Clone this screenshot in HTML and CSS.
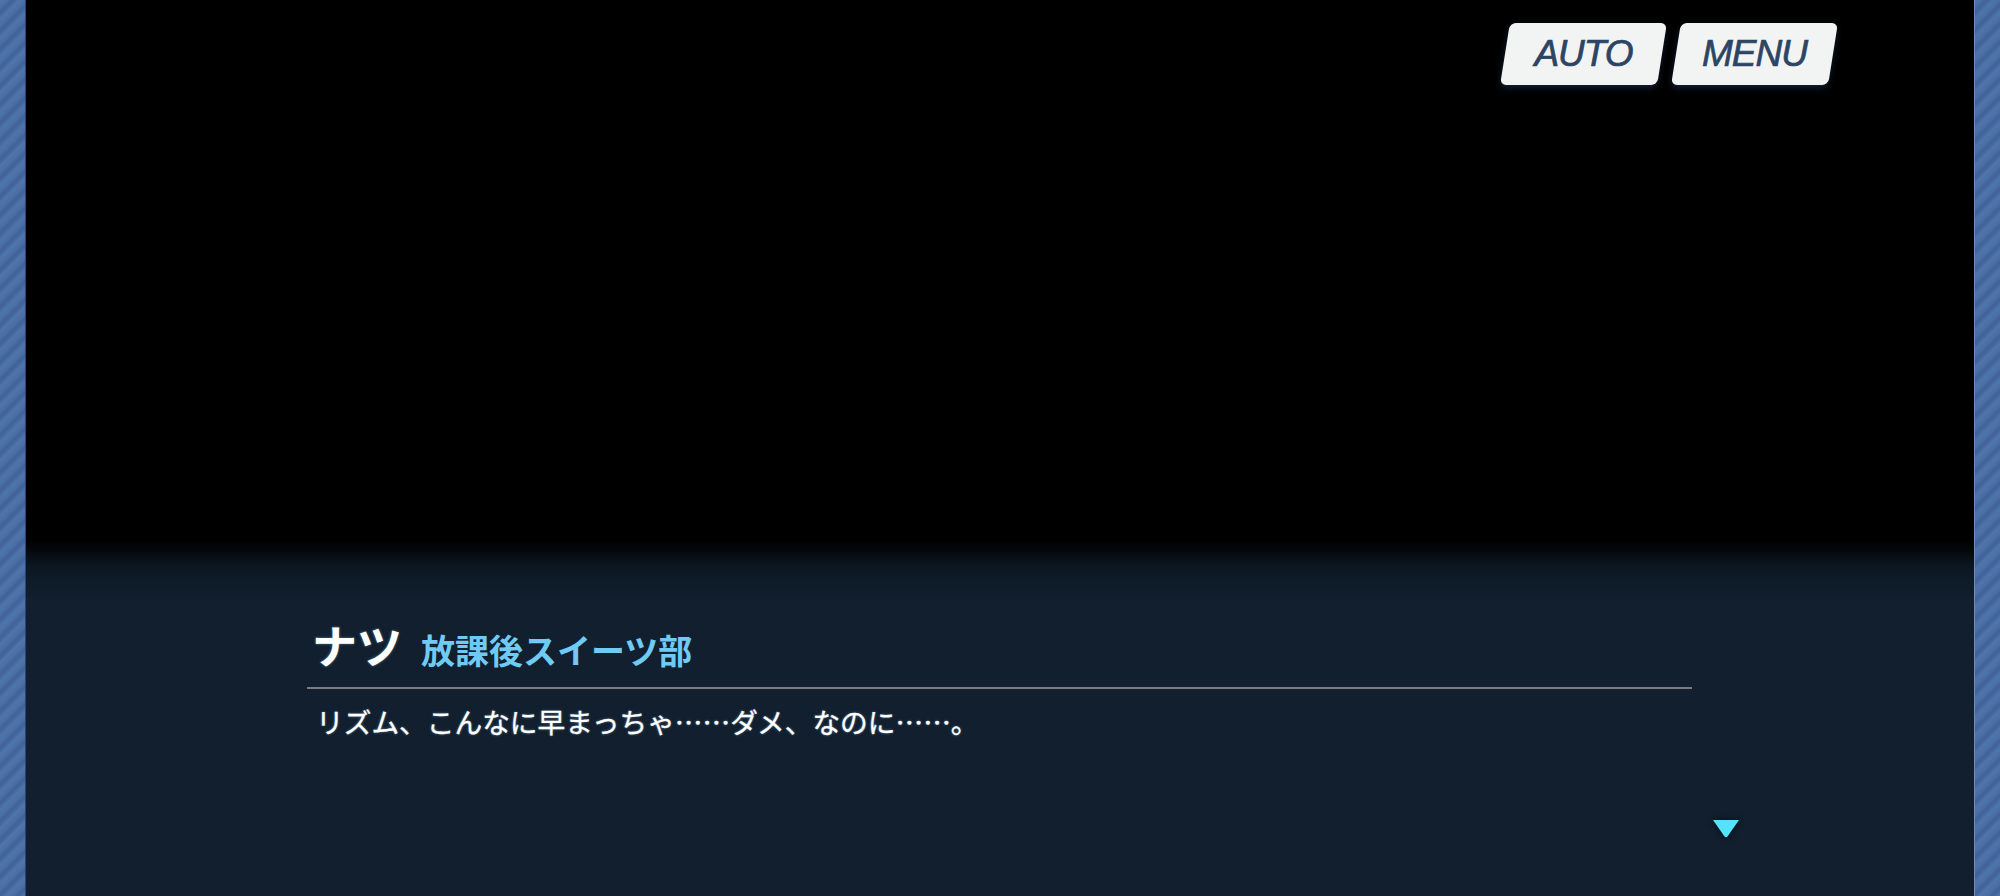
FILE: index.html
```html
<!DOCTYPE html>
<html lang="ja">
<head>
    <meta charset="UTF-8">
    <meta name="viewport" content="width=device-width, initial-scale=1.0">
    <title>Scenario</title>
    <link rel="stylesheet" href="styles.css">
</head>
<body>
    <div class="frame">
        <div class="side"></div>
        <div class="stage">
            <div class="toolbar">
                <button class="tool-btn"><span>AUTO</span></button>
                <button class="tool-btn"><span>MENU</span></button>
            </div>
            <div class="dialogue">
                <div class="dialogue-body">
                    <div class="speaker">
                        <span class="speaker-name">ナツ</span>
                        <span class="speaker-club">放課後スイーツ部</span>
                    </div>
                    <p class="line">リズム、こんなに早まっちゃ……ダメ、なのに……。</p>
                </div>
                <svg class="next" width="28" height="19" viewBox="0 0 28 19">
                    <path d="M1 1 L27 1 L15.5 17.5 Q14 19 12.5 17.5 Z" fill="#54e3fa"/>
                </svg>
            </div>
        </div>
        <div class="side side-right"></div>
    </div>
</body>
</html>
```

FILE: styles.css
```css
html, body {
    margin: 0;
    height: 100%;
    background: #000;
}
.frame {
    display: flex;
    width: 2000px;
    height: 896px;
    overflow: hidden;
}
.side {
    width: 26px;
    flex-shrink: 0;
    background: repeating-linear-gradient(135deg, #4f75ab 0, #4b70a6 5px, #41619a 9px, #4b70a6 13px);
    box-shadow: inset -1px 0 0 #2d4670;
}
.side-right {
    box-shadow: inset 1px 0 0 #6a8cc0;
}
.stage {
    flex: 1;
    display: flex;
    flex-direction: column;
    justify-content: space-between;
    background: #000;
}
.toolbar {
    display: flex;
    justify-content: flex-end;
    gap: 14px;
    padding: 23px 141px 0 0;
}
.tool-btn {
    width: 157px;
    height: 62px;
    padding: 0;
    border: none;
    border-radius: 6px;
    background: #f2f4f3;
    transform: skewX(-9deg);
    box-shadow: 0 3px 6px rgba(25, 45, 75, 0.7);
    cursor: pointer;
}
.tool-btn span {
    display: block;
    font-family: "Liberation Sans", Arial, sans-serif;
    font-size: 37px;
    font-style: italic;
    letter-spacing: -1px;
    color: #2c4564;
    -webkit-text-stroke: 0.7px #2c4564;
    transform: skewX(9deg);
}
.dialogue {
    display: flex;
    height: 356px;
    padding-left: 281px;
    box-sizing: border-box;
    background: linear-gradient(to bottom, rgba(17, 31, 46, 0) 0, #0c1824 28px, #111f2e 60px, #111f2e 100%);
    font-family: "Noto Sans CJK JP", sans-serif;
}
.dialogue-body {
    width: 1385px;
    padding-top: 72px;
}
.speaker {
    display: flex;
    align-items: baseline;
    gap: 19px;
    padding: 0 0 10px 5px;
    border-bottom: 2px solid #7b7b7d;
}
.speaker-name {
    font-size: 45px;
    font-weight: bold;
    color: #fff;
    text-shadow: 0 0 3px rgba(140, 175, 210, 0.6);
}
.speaker-club {
    font-size: 34px;
    font-weight: bold;
    color: #6fcaf4;
}
.line {
    margin: 12px 0 0 9px;
    font-size: 27.7px;
    font-weight: 400;
    color: #fff;
    -webkit-text-stroke: 0.3px #fff;
    text-shadow: 0 0 3px rgba(140, 175, 210, 0.6);
}
.next {
    align-self: flex-end;
    margin: 0 0 58px 20px;
    filter: drop-shadow(0 0 3px rgba(0, 0, 0, 0.6));
}
```
